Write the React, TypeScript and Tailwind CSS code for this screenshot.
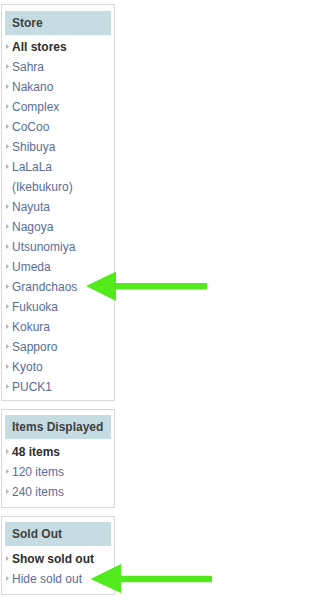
import React from 'react';

type Item = { label: string; active?: boolean };

const stores: Item[] = [
  { label: 'All stores', active: true },
  { label: 'Sahra' },
  { label: 'Nakano' },
  { label: 'Complex' },
  { label: 'CoCoo' },
  { label: 'Shibuya' },
  { label: 'LaLaLa (Ikebukuro)' },
  { label: 'Nayuta' },
  { label: 'Nagoya' },
  { label: 'Utsunomiya' },
  { label: 'Umeda' },
  { label: 'Grandchaos' },
  { label: 'Fukuoka' },
  { label: 'Kokura' },
  { label: 'Sapporo' },
  { label: 'Kyoto' },
  { label: 'PUCK1' },
];

const counts: Item[] = [
  { label: '48 items', active: true },
  { label: '120 items' },
  { label: '240 items' },
];

const soldOut: Item[] = [
  { label: 'Show sold out', active: true },
  { label: 'Hide sold out' },
];

const Bullet = () => (
  <svg className="absolute left-[1px] top-[7px]" width="3" height="5" viewBox="0 0 3 5">
    <path d="M0 0L3 2.5L0 5Z" fill="#b4b4b4" />
  </svg>
);

const FilterBox: React.FC<{ title: string; items: Item[]; className?: string; listClass?: string }> = ({
  title,
  items,
  className,
  listClass,
}) => (
  <div className={`w-[114px] border border-[#d9d9d9] px-[3px] ${className ?? ''}`}>
    <div className="h-[24px] bg-[#c6dce3] pl-[7px] flex items-center font-bold text-[#404040]">{title}</div>
    <ul className={listClass}>
      {items.map((it) => (
        <li key={it.label} className="relative pl-[7px] leading-[20px]">
          <Bullet />
          {it.active ? (
            <span className="font-bold text-[#2e2e2e]">{it.label}</span>
          ) : (
            <a className="text-[#596d9a]">{it.label}</a>
          )}
        </li>
      ))}
    </ul>
  </div>
);

export default function App() {
  return (
    <div className="relative w-[230px] h-[600px] bg-white overflow-hidden font-['Liberation_Sans',Arial,sans-serif] text-[12px]">
      <div className="flex flex-col pl-[1px] pt-[4px]">
        <FilterBox title="Store" items={stores} className="pt-[6px] pb-[3px]" listClass="mt-[2px]" />
        <FilterBox title="Items Displayed" items={counts} className="mt-[8px] pt-[5px] pb-[5px]" listClass="mt-[3px]" />
        <FilterBox title="Sold Out" items={soldOut} className="mt-[8px] pt-[5px] pb-[5px]" listClass="mt-[3px]" />
      </div>

      {/* green pointer arrows */}
      <svg className="absolute inset-0 pointer-events-none" width="230" height="600" viewBox="0 0 230 600">
        <path d="M86 286L116 271.5L116 283L207 283L207 289.5L116 289.5L116 301Z" fill="#52ea1c" />
        <path d="M90.5 579L121 564L121 575.7L212 575.7L212 582.3L121 582.3L121 593Z" fill="#52ea1c" />
      </svg>
    </div>
  );
}
